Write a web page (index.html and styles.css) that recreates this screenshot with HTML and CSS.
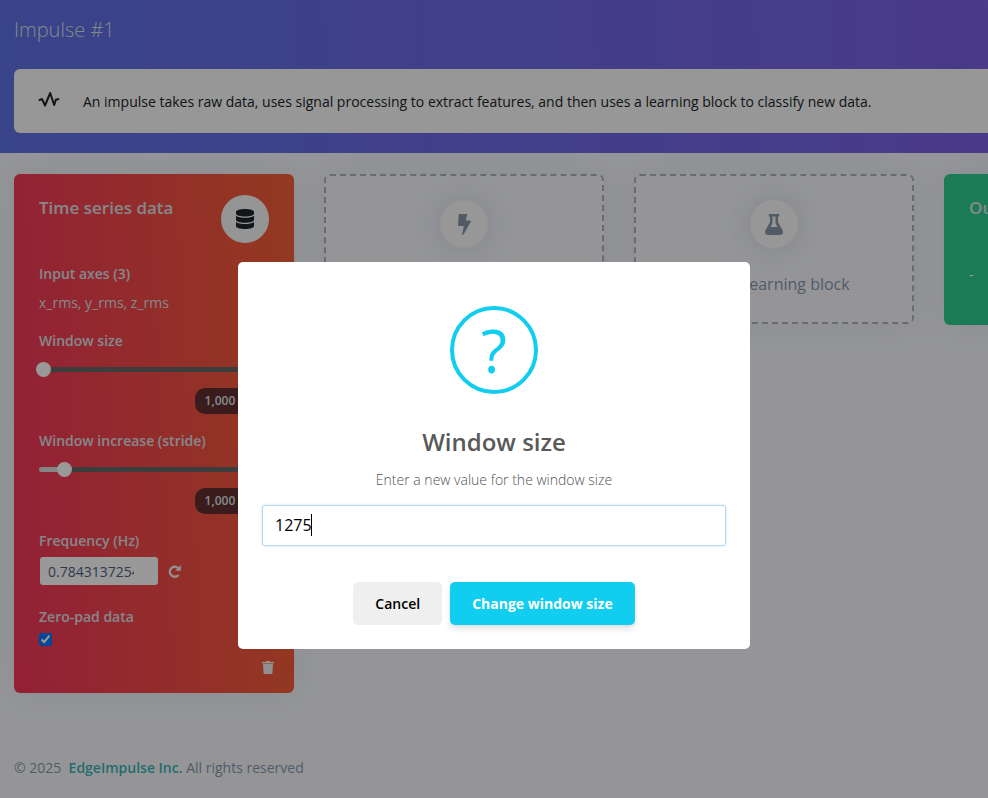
FILE: index.html
```html
<!DOCTYPE html>
<html lang="en">
<head>
<meta charset="utf-8">
<title>Impulse #1</title>
<link rel="stylesheet" href="styles.css">
</head>
<body>
<header class="hero">
  <h1 class="hero-title">Impulse #1</h1>
  <div class="notice">
    <svg class="notice-icon" width="22" height="18" viewBox="0 0 22 18" fill="none" stroke="currentColor" stroke-width="2" stroke-linecap="round" stroke-linejoin="round"><path d="M1.500 10L4 9L7 15.500L12.200 3L16.200 15L18 9.500L20.500 9.200"/></svg>
    <p>An impulse takes raw data, uses signal processing to extract features, and then uses a learning block to classify new data.</p>
  </div>
</header>

<main class="blocks">
  <section class="card card-input">
    <div class="card-head">
      <h2 class="card-title">Time series data</h2>
      <span class="disc">
        <svg width="18" height="20" viewBox="0 0 18 20" fill="currentColor"><path d="M0 3C0 1.200 4 0 9 0s9 1.200 9 3v1.500C18 6.300 14 7.500 9 7.500S0 6.300 0 4.500z"/><path d="M0 6.800C2 8.200 5.400 8.800 9 8.800s7-.6 9-2v4C18 12.600 14 13.800 9 13.800S0 12.600 0 10.800z"/><path d="M0 13C2 14.400 5.400 15 9 15s7-.6 9-2v4c0 1.800-4 3-9 3s-9-1.200-9-3z"/></svg>
      </span>
    </div>
    <h3 class="label">Input axes (3)</h3>
    <p class="axes">x_rms, y_rms, z_rms</p>
    <div class="field">
      <label class="label" for="size">Window size</label>
      <input class="slider slider-start" id="size" type="range" min="0" max="215" value="0">
      <output class="pill" for="size">1,000 ms.</output>
    </div>
    <div class="field">
      <label class="label" for="stride">Window increase (stride)</label>
      <input class="slider slider-stride" id="stride" type="range" min="0" max="215" value="21">
      <output class="pill" for="stride">1,000 ms.</output>
    </div>
    <label class="label" for="freq">Frequency (Hz)</label>
    <div class="freq-row">
      <input class="freq" id="freq" type="text" value="0.7843137254901961">
      <button class="icon-button" type="button" aria-label="Reset frequency">
        <svg width="13" height="13" viewBox="0 0 13 13" fill="none" stroke="currentColor" stroke-width="2.300"><path d="M10.600 10A5 5 0 1 1 10.400 3.300"/><path d="M12.900 0V5.800H7.200z" fill="currentColor" stroke="none"/></svg>
      </button>
    </div>
    <label class="label" for="pad">Zero-pad data</label>
    <input class="check" id="pad" type="checkbox" checked>
    <button class="icon-button trash" type="button" aria-label="Delete block">
      <svg width="12" height="13" viewBox="0 0 12 13" fill="currentColor"><path d="M0 1h3.500L4.200 0h3.600l.7 1H12v1.500H0z"/><path d="M1 3h10l-.6 9a1 1 0 0 1-1 1H2.600a1 1 0 0 1-1-1z"/></svg>
    </button>
  </section>

  <section class="slot">
    <span class="disc disc-muted">
      <svg width="13" height="21" viewBox="0 0 13 21" fill="currentColor"><path d="M1.500 0H8.300a.8.800 0 0 1 .8 1L7.800 6.500h4.300a.8.800 0 0 1 .7 1.200L5.500 20.400a.7.700 0 0 1-1.300-.5L5.800 12H.9a.8.800 0 0 1-.8-.9L.7.800A.9.900 0 0 1 1.500 0z"/></svg>
    </span>
    <p>Add a processing block</p>
  </section>

  <section class="slot">
    <span class="disc disc-muted">
      <svg width="18" height="21" viewBox="0 0 18 21" fill="currentColor"><path fill-rule="evenodd" d="M4.500 0h9a.7.700 0 0 1 .7.700v1.200a.7.700 0 0 1-.7.700H13V8l4.600 8.500c1 2-.2 4.500-2.400 4.500H2.800C.6 21-.6 18.500.4 16.500L5 8V2.600h-.5a.7.700 0 0 1-.7-.7V.7a.7.700 0 0 1 .7-.7zM5.700 13h6.600L10.500 9V2.600h-3V9z"/></svg>
    </span>
    <p>Add a learning block</p>
  </section>

  <section class="card card-output">
    <h2 class="card-title">Output features</h2>
    <p class="features">-</p>
  </section>
</main>

<footer class="footer">© 2025 &nbsp;<a href="#">EdgeImpulse Inc.</a> All rights reserved</footer>

<div class="overlay">
  <form class="modal" role="dialog" aria-labelledby="modal-title">
    <div class="modal-icon">?</div>
    <h2 class="modal-title" id="modal-title">Window size</h2>
    <label class="modal-text" for="value">Enter a new value for the window size</label>
    <div class="modal-field">
      <input class="modal-input" id="value" type="text" value="1275">
      <span class="caret"></span>
    </div>
    <div class="modal-actions">
      <button class="button" type="button">Cancel</button>
      <button class="button button-primary" type="button">Change window size</button>
    </div>
  </form>
</div>
</body>
</html>
```
FILE: styles.css
```css
* { box-sizing: border-box; }

body {
  margin: 0;
  min-height: 100vh;
  overflow: hidden;
  background: #f8f9fe;
  color: #525f7f;
  font: 14px/20px "Open Sans", "Noto Sans", sans-serif;
}

h1, h2, h3, p { margin: 0; }

button, input { font: inherit; margin: 0; }

svg { display: block; }

.hero {
  padding: 16px 0 20px 14px;
  background: linear-gradient(87deg, #5e72e4 0%, #825ee4 120%);
}

.hero-title {
  margin-bottom: 25px;
  color: #dee2e6;
  font-size: 20px;
  font-weight: 300;
  line-height: 28px;
}

.notice {
  display: flex;
  align-items: center;
  gap: 23px;
  height: 64px;
  padding: 2px 0 0 24px;
  border-radius: 6px 0 0 6px;
  background: #fafcfa;
  color: #212529;
}

.notice-icon { margin-bottom: 6px; }

.blocks {
  display: flex;
  align-items: flex-start;
  gap: 30px;
  padding: 21px 14px 40px;
  overflow: hidden;
}

.card, .slot {
  flex: 0 0 280px;
  border-radius: 6px;
  box-shadow: 0 0 32px rgba(136, 152, 170, .15);
}

.card {
  padding: 21px 25px 19px;
  color: #fff;
}

.card-input { background: linear-gradient(87deg, #f5365c 0%, #f56036 100%); }

.card-output {
  min-height: 151px;
  background: linear-gradient(87deg, #2dce89 0%, #2dcecc 100%);
}

.card-head {
  display: flex;
  justify-content: space-between;
  margin-bottom: 21px;
}

.card-title {
  color: #dee2e6;
  font-size: 17px;
  font-weight: 600;
  line-height: 26px;
}

.features { margin-top: 44px; }

.disc {
  display: flex;
  align-items: center;
  justify-content: center;
  width: 48px;
  height: 48px;
  border-radius: 50%;
  background: #f8f9fa;
  color: #212529;
}

.disc-muted {
  background: #fbfcfa;
  color: #8898aa;
  box-shadow: 0 0 32px rgba(136, 152, 170, .3);
}

.label {
  display: block;
  color: #dee2e6;
  font-size: 14px;
  font-weight: 600;
}

.axes {
  margin: 9px 0 18px;
  color: #dee2e6;
}

.field {
  display: flex;
  flex-direction: column;
  margin-bottom: 17px;
}

.slider {
  appearance: none;
  width: 100%;
  height: 16px;
  margin: 10px 0 11px;
  background: none;
}

.slider::-webkit-slider-runnable-track {
  height: 5px;
  border-radius: 3px;
  background: #666;
}

.slider-stride::-webkit-slider-runnable-track {
  background: linear-gradient(90deg, #dedede 25px, #666 25px);
}

.slider::-webkit-slider-thumb {
  appearance: none;
  width: 15px;
  height: 15px;
  margin: -5px 0 0 -3px;
  border-radius: 50%;
  background: #fff;
}

.pill {
  align-self: flex-end;
  padding: 3px 10px;
  border-radius: 10px;
  background: #612f30;
  color: #dee2e6;
  font-size: 12px;
  font-weight: 600;
}

.freq-row {
  display: flex;
  align-items: center;
  gap: 9px;
  margin: 5px 0 21px;
}

.freq {
  width: 120px;
  height: 30px;
  padding: 0 24px 0 8px;
  border: 1px solid transparent;
  border-radius: 4px;
  background: #fff padding-box;
  color: #525f7f;
}

.icon-button {
  padding: 0;
  border: 0;
  background: none;
  color: #f1f1f1;
}

.check {
  display: block;
  width: 13px;
  height: 13px;
  margin-top: 6px;
  accent-color: #0075ff;
}

.trash {
  display: block;
  margin: 15px -5px 0 auto;
}

.slot {
  display: flex;
  flex-direction: column;
  align-items: center;
  gap: 24px;
  height: 150px;
  padding-top: 24px;
  border: 2px dashed #adb5bd;
  color: #8898aa;
  font-size: 16px;
  line-height: 24px;
}

.footer {
  padding: 25px 14px 20px;
  color: #8898aa;
}

.footer a {
  color: #3bb5b6;
  font-weight: 600;
  text-decoration: none;
}

.overlay {
  position: fixed;
  inset: 0;
  display: flex;
  align-items: flex-start;
  justify-content: center;
  padding-top: 262px;
  background: rgba(0, 0, 0, .4);
}

.modal {
  display: flex;
  flex-direction: column;
  align-items: center;
  width: 512px;
  max-width: 100%;
  padding: 44px 24px 24px;
  border-radius: 5px;
  background: #fff;
}

.modal-icon {
  width: 88px;
  height: 88px;
  border: 4px solid #11cdef;
  border-radius: 50%;
  color: #11cdef;
  font-size: 60px;
  font-weight: 500;
  line-height: 80px;
  text-align: center;
}

.modal-title {
  margin: 32px 0 12px;
  color: #595959;
  font-size: 24px;
  font-weight: 600;
  line-height: 32px;
}

.modal-text {
  margin-bottom: 15px;
  color: #545454;
  font-weight: 300;
}

.modal-field {
  position: relative;
  width: 100%;
}

.modal-input {
  display: block;
  width: 100%;
  height: 41px;
  padding: 0 12px 2px;
  border: 1px solid #b4dbed;
  border-radius: 3px;
  outline: none;
  box-shadow: 0 0 3px #c4e6f5;
  color: #000;
  font-size: 16px;
}

.caret {
  position: absolute;
  top: 9px;
  left: 49px;
  width: 1px;
  height: 22px;
  background: #000;
}

.modal-actions {
  display: flex;
  gap: 8px;
  margin-top: 36px;
}

.button {
  height: 43px;
  padding: 0 22px;
  border: 0;
  border-radius: 5px;
  background: #efefef;
  color: #000;
  font-weight: 600;
}

.button-primary {
  background: #11cdef;
  color: #fff;
  font-weight: 700;
  box-shadow: 0 4px 6px rgba(50, 50, 93, .11), 0 1px 3px rgba(0, 0, 0, .08);
}
```
